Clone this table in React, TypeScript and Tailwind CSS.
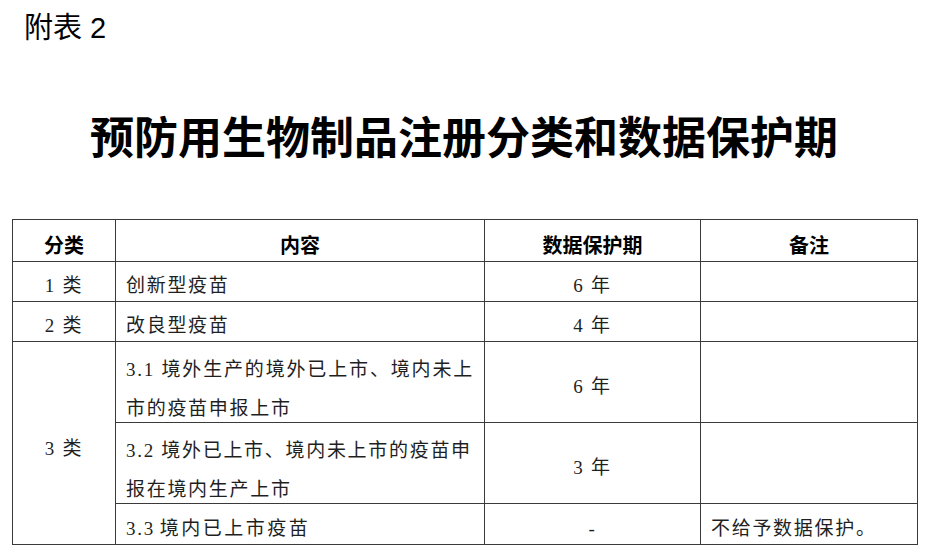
import React from 'react';

const bodyFont = "font-['Liberation_Serif','Noto_Sans_CJK_SC',serif] text-[19px] tracking-[1.7px] text-[#1f1f1f]";
const cell = 'border-r border-b border-[#3a3a3a]';

function Head({ children }: { children: React.ReactNode }) {
    return (
        <div className={`${cell} flex items-center justify-center pt-[8px] font-['Noto_Sans_CJK_SC',sans-serif] text-[20px] font-bold leading-none text-black`}>
            {children}
        </div>
    );
}

function Center({ children, extra = '' }: { children?: React.ReactNode; extra?: string }) {
    return (
        <div className={`${cell} ${bodyFont} flex items-center justify-center pt-[8px] leading-none ${extra}`}>
            {children}
        </div>
    );
}

function Left({ children }: { children?: React.ReactNode }) {
    return (
        <div className={`${cell} ${bodyFont} flex items-center pl-[10px] pt-[8px] leading-none whitespace-nowrap`}>
            {children}
        </div>
    );
}

export default function App() {
    return (
        <div className="h-[556px] w-[928px] bg-white pt-[14px]">
            <div className="pl-[24px] font-['Liberation_Sans','Noto_Sans_CJK_SC',sans-serif] text-[29px] leading-[28px] text-black">
                附表 2
            </div>

            <h1 className="mt-[71px] text-center font-['Noto_Sans_CJK_SC',serif] text-[44px] font-bold leading-[44px] text-black">
                预防用生物制品注册分类和数据保护期
            </h1>

            <div className="mt-[62px] ml-[12px] grid w-[906px] grid-cols-[103px_369px_216px_217px] grid-rows-[42px_40px_40px_81px_81px_41px] border-l border-t border-[#3a3a3a]">
                <Head>分类</Head>
                <Head>内容</Head>
                <Head>数据保护期</Head>
                <Head>备注</Head>

                <Center>1 类</Center>
                <Left>创新型疫苗</Left>
                <Center>6 年</Center>
                <Center />

                <Center>2 类</Center>
                <Left>改良型疫苗</Left>
                <Center>4 年</Center>
                <Center />

                <Center extra="row-span-3 pt-[10px]">3 类</Center>

                <div className={`${cell} ${bodyFont} px-[10px] pt-[8px] leading-[39px]`}>
                    <div className="text-justify [text-align-last:justify]">3.1 境外生产的境外已上市、境内未上</div>
                    <div className="whitespace-nowrap">市的疫苗申报上市</div>
                </div>
                <Center>6 年</Center>
                <Center />

                <div className={`${cell} ${bodyFont} px-[10px] pt-[8px] leading-[39px]`}>
                    <div className="whitespace-nowrap">3.2 境外已上市、境内未上市的疫苗申</div>
                    <div className="whitespace-nowrap">报在境内生产上市</div>
                </div>
                <Center>3 年</Center>
                <Center />

                <div className={`${cell} ${bodyFont} flex items-center pl-[10px] pt-[8px] leading-none whitespace-nowrap`}>
                    <span>3.3</span>
                    <span className="ml-[5px] tracking-[2.5px]">境内已上市疫苗</span>
                </div>
                <Center>-</Center>
                <Left>不给予数据保护。</Left>
            </div>
        </div>
    );
}
